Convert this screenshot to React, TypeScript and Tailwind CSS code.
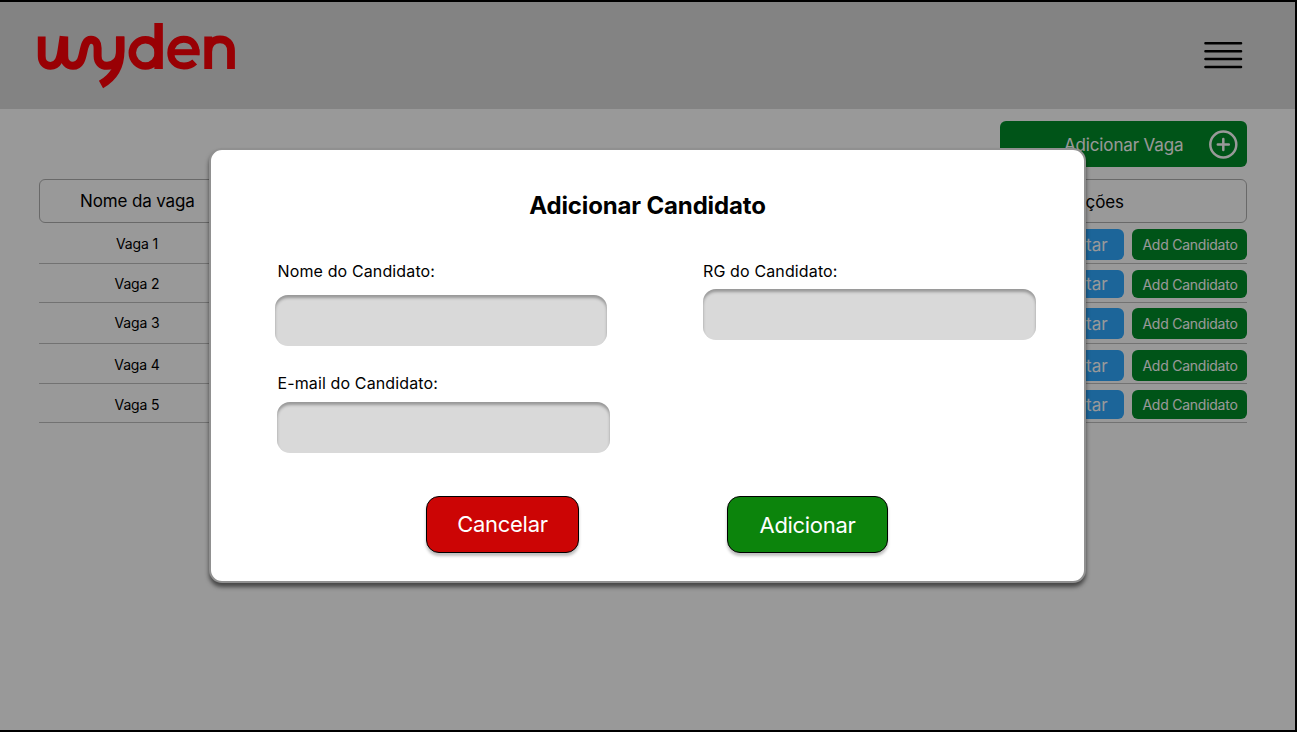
import React from "react";

const rows = [
  { name: "Vaga 1", row: "h-[41px]", pad: "pt-[6px]", btn: "h-[31px]", text: "h-[41px]" },
  { name: "Vaga 2", row: "h-[39px]", pad: "pt-[6px]", btn: "h-[28px]", text: "h-[39px]" },
  { name: "Vaga 3", row: "h-[41px]", pad: "pt-[5px]", btn: "h-[31px]", text: "h-[38px]" },
  { name: "Vaga 4", row: "h-[40px]", pad: "pt-[6px]", btn: "h-[31px]", text: "h-[40px]" },
  { name: "Vaga 5", row: "h-[39px]", pad: "pt-[6px]", btn: "h-[29px]", text: "h-[40px]" },
];

function Logo() {
  return (
    <svg
      role="img"
      aria-label="wyden"
      className="ml-[37px] mt-[20px] h-[67px] w-[200px]"
      viewBox="37 22 200 67"
      fill="none"
      stroke="#ff0008"
      strokeWidth="8.5"
    >
      <path d="M41.7 36.4V56C41.7 62 45 65.8 50.5 65.8C58.5 65.8 60.3 58 61.5 50L63.6 36.4" strokeWidth="7.8" />
      <path d="M64.2 36.4V56C64.2 62 67.5 65.8 73 65.8C87 65.8 80 39.8 91 39.8C95.5 39.8 97.6 43 97.6 48V56C97.6 62 101 65.8 107 65.8C114.5 65.8 120.2 60 120.2 51V36.4" strokeWidth="8" />
      <path d="M120.2 36.4V51C120.2 66 113.5 77.5 101 84.5" />
      <circle cx="145.4" cy="52.8" r="13.1" strokeWidth="7.5" />
      <path d="M158.6 23V69" />
      <path d="M171 52.2H199.4" strokeWidth="6" />
      <path d="M196 55C197 45 191.8 39.3 183.7 39.3C176 39.3 170.8 45.2 170.8 52.9C170.8 60.7 176.2 66 184 66C188.6 66 191.8 64.7 194.7 62" strokeWidth="7" />
      <path d="M208.2 69V36.6M208.2 69V52C208.2 44 213 39.3 220 39.3C227 39.3 231 43.5 231 51V69" strokeWidth="7.8" />
    </svg>
  );
}

function Field({ label, className, box }: { label: string; className: string; box: string }) {
  return (
    <label className={"flex flex-col text-[16px] leading-[20px] tracking-[0.13px] text-black " + className}>
      <span className="whitespace-nowrap">{label}</span>
      <input className={"h-[51px] rounded-[13px] bg-[#d9d9d9] px-4 outline-none shadow-[inset_0_3px_3px_rgba(0,0,0,0.3)] " + box} />
    </label>
  );
}

export default function App() {
  return (
    <div className="relative h-[732px] w-full overflow-hidden border-t-2 border-r-2 border-b-2 border-black bg-white font-['Inter',sans-serif]">
      <header className="flex h-[107px] justify-between bg-[#dadada]">
        <Logo />
        <svg className="mr-[52px] mt-[38px] h-[30px] w-[40px]" viewBox="0 0 40 30" stroke="#000" strokeWidth="2.6" strokeLinecap="round">
          <path d="M2.5 3.3H38M2.5 11.3H38M2.5 19H38M2.5 27H38" />
        </svg>
      </header>

      <main className="flex flex-col pl-[39px] pr-[48px]">
        <button className="mt-[12px] flex h-[46px] w-[247px] items-center self-end rounded-[6px] bg-[#008d28] pl-[64px] text-[17px] text-white">
          <span className="w-[145px] pt-[3px] text-left tracking-[-0.15px]">Adicionar Vaga</span>
          <svg className="h-[30px] w-[30px]" viewBox="0 0 30 30" fill="none" stroke="#fff" strokeWidth="2.5" strokeLinecap="round">
            <circle cx="14.3" cy="15.5" r="13" />
            <path d="M14.3 10V21M8.8 15.5H19.8" />
          </svg>
        </button>

        <section className="mt-[12px] flex flex-col text-black">
          <div className="flex h-[44px] items-center justify-between rounded-[6px] border border-[#b0b0b0] pt-[2px] text-[17px]">
            <span className="ml-[40px] tracking-[-0.14px]">Nome da vaga</span>
            <span className="mr-[122px] pt-px tracking-[-0.1px]">Ações</span>
          </div>
          {rows.map((r) => (
            <div key={r.name} className={"flex items-start justify-between border-b border-[#bfbfbf] " + r.row}>
              <span className={"flex w-[196px] items-center justify-center text-[14px] tracking-[-0.15px] " + r.text}>{r.name}</span>
              <div className={"flex gap-2 " + r.pad}>
                <button className={"flex w-[80px] items-center justify-center rounded-[6px] bg-[#2fa8ff] pl-px pt-[2px] text-[17px] text-white " + r.btn}>Editar</button>
                <button className={"flex w-[115px] items-center justify-center whitespace-nowrap rounded-[6px] bg-[#008d28] pl-px text-[14px] tracking-[-0.25px] text-white " + r.btn}>Add Candidato</button>
              </div>
            </div>
          ))}
        </section>
      </main>

      <div className="absolute inset-0 bg-black/40 pl-[209px] pt-[146px]">
        <div role="dialog" aria-modal="true" className="flex h-[435px] w-[877px] flex-col rounded-[13px] border-2 border-[#909090] bg-white shadow-[0_4px_4px_rgba(0,0,0,0.55)]">
          <h1 className="mt-[41px] text-center text-[24px] leading-[30px] font-bold tracking-[-0.15px] text-black">Adicionar Candidato</h1>
          <div className="mt-[40px] flex h-[112px] pl-[64px]">
            <Field label="Nome do Candidato:" className="w-[428px] pl-[2.5px]" box="mt-[14px] -ml-[2.5px] w-[332px]" />
            <Field label="RG do Candidato:" className="" box="mt-[8px] w-[333px]" />
          </div>
          <Field label="E-mail do Candidato:" className="pl-[66.4px]" box="mt-[9px] w-[333px]" />
          <div className="mt-[43px] flex pl-[215px]">
            <button className="h-[57px] w-[153px] rounded-[13px] border border-black bg-[#cc0505] text-[22px] tracking-[-0.3px] text-white shadow-[0_3px_3px_rgba(0,0,0,0.25)]">Cancelar</button>
            <button className="ml-[148px] h-[57px] w-[161px] rounded-[13px] border border-black bg-[#0c840c] pt-px text-[22px] tracking-[-0.3px] text-white shadow-[0_3px_3px_rgba(0,0,0,0.25)]">Adicionar</button>
          </div>
        </div>
      </div>
    </div>
  );
}
